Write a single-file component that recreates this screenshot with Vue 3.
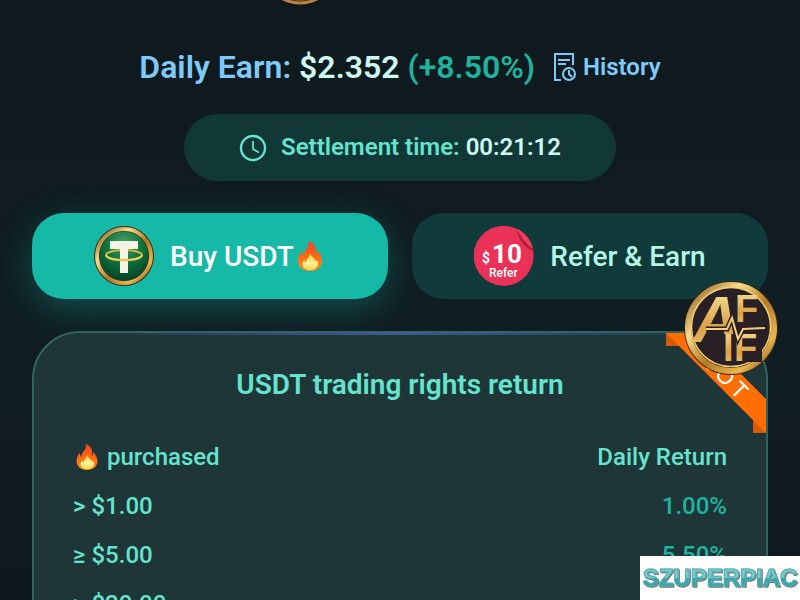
<script setup>
import { ref, computed, onMounted, onUnmounted } from 'vue'

const rows = [
  { id: 1, sign: '>', amount: '$1.00', rate: '1.00%' },
  { id: 2, sign: '≥', amount: '$5.00', rate: '5.50%' },
  { id: 3, sign: '≥', amount: '$20.00', rate: '6.00%' },
]

const secondsLeft = ref(21 * 60 + 12)
let timer = null

const countdown = computed(() => {
  const s = secondsLeft.value
  return [Math.floor(s / 3600), Math.floor(s / 60) % 60, s % 60]
    .map((n) => String(n).padStart(2, '0'))
    .join(':')
})

onMounted(() => {
  timer = setInterval(() => {
    secondsLeft.value = Math.max(0, secondsLeft.value - 60)
  }, 60000)
})
onUnmounted(() => clearInterval(timer))
</script>

<template>
  <main class="page">
    <svg class="defs" aria-hidden="true">
      <defs>
        <linearGradient id="gold" x1="0" y1="0" x2="1" y2="1">
          <stop offset="0" stop-color="#7a4d10" />
          <stop offset="0.3" stop-color="#f8dc8c" />
          <stop offset="0.55" stop-color="#b07a24" />
          <stop offset="0.8" stop-color="#e9b650" />
          <stop offset="1" stop-color="#5b3608" />
        </linearGradient>
        <linearGradient id="letters" x1="0" y1="0" x2="0" y2="1">
          <stop offset="0" stop-color="#fbe6a4" />
          <stop offset="0.6" stop-color="#d9a146" />
          <stop offset="1" stop-color="#f0c872" />
        </linearGradient>
        <radialGradient id="green" cx="0.5" cy="0.25" r="0.8">
          <stop offset="0" stop-color="#4fa566" />
          <stop offset="0.45" stop-color="#0f7440" />
          <stop offset="1" stop-color="#043d22" />
        </radialGradient>
        <linearGradient id="flame" x1="0" y1="0" x2="0" y2="1">
          <stop offset="0" stop-color="#f4412c" />
          <stop offset="0.6" stop-color="#ff6d10" />
          <stop offset="1" stop-color="#ff9416" />
        </linearGradient>
        <linearGradient id="core" x1="0" y1="0" x2="0" y2="1">
          <stop offset="0" stop-color="#ffc928" />
          <stop offset="0.6" stop-color="#fff09a" />
          <stop offset="1" stop-color="#ffd94a" />
        </linearGradient>
        <symbol id="fire" viewBox="0 0 24 30">
          <path fill="url(#flame)" d="M10 0c5 1 8 5 8 10 0 2-.3 3-.5 4 1.500-1 2-3 1.800-5 3 4 4.700 7 4.700 11 0 6-5 10-12 10S0 26 0 20c0-4 1.500-8 4-10-.2 2 .2 4 1.500 5 0-4 2-6 4-8.500C11 4.500 11 2 10 0z" />
          <path fill="url(#core)" d="M12 12c.5 3 5 5 6 9 .4-.8.700-1.600.7-2.500 1 1.500 1.300 2.500 1.300 4 0 4-3.500 6.500-8 6.500s-7.500-2.500-7.500-6c0-2 1-3.500 2-4.500 0 1.500.5 2.500 1.500 3 0-4 4-5.500 4-9.500z" />
        </symbol>
      </defs>
    </svg>

    <svg class="coin-edge" viewBox="0 0 48 6" aria-hidden="true">
      <circle cx="24" cy="-33" r="38" fill="#2a190c" />
      <circle cx="24" cy="-33" r="36" fill="none" stroke="#b88448" stroke-width="3" />
      <circle cx="24" cy="-33" r="34" fill="#6d5a34" />
    </svg>

    <section class="earn">
      <p class="earn-line">
        Daily Earn: <span class="amount">$2.352</span> <span class="rate">(+8.50%)</span>
      </p>
      <a class="history" href="#history">
        <svg class="history-icon" viewBox="0 0 24 30" fill="none" stroke="currentColor" stroke-width="2" aria-hidden="true">
          <path d="M8 28H2V2h18v11M5 8h12M5 12h8" />
          <circle cx="16" cy="22" r="6" />
          <path d="M16 18v4l3 3" />
        </svg>
        History
      </a>
    </section>

    <div class="settlement">
      <svg class="clock" viewBox="0 0 28 28" fill="none" stroke="currentColor" aria-hidden="true">
        <circle cx="14" cy="14" r="12" stroke-width="2.400" />
        <path d="M14 7v8l6 3.500" stroke-width="1.800" />
      </svg>
      <span>Settlement time: <b class="time">{{ countdown }}</b></span>
    </div>

    <div class="actions">
      <button class="action buy" type="button">
        <svg class="badge" viewBox="0 0 60 60" aria-hidden="true">
          <circle cx="30" cy="30" r="30" fill="#33290f" />
          <circle cx="30" cy="30" r="27" fill="none" stroke="url(#gold)" stroke-width="4" />
          <circle cx="30" cy="30" r="24.500" fill="url(#green)" />
          <path d="M16 15h28v8H34v24h-8V23H16z" fill="#f5f2e6" />
          <ellipse cx="30" cy="29" rx="18" ry="5" fill="none" stroke="#d3b944" stroke-width="2" />
          <path d="M26 23h8v8h-8z" fill="#f5f2e6" />
          <path d="M12 29c2 7 34 7 36 0" fill="none" stroke="#e2cc58" stroke-width="2" />
        </svg>
        <span class="label buy-label">Buy USDT<svg class="fire" aria-hidden="true"><use href="#fire" /></svg></span>
      </button>
      <button class="action refer" type="button">
        <svg class="badge" viewBox="0 0 60 60" aria-hidden="true">
          <path d="M43 3A30 30 0 1 0 59 24z" fill="#ea3158" />
          <path d="M43 3c1 9 5 17 16 22C59 18 52 8 43 3z" fill="#b81a3d" />
          <path d="M43 3c4 8 9 15 16 20C57 14 51 6 43 3z" fill="#ee3f63" />
          <text x="8" y="37" class="badge-dollar">$</text>
          <text x="18" y="37" class="badge-number">10</text>
          <text x="15" y="51" class="badge-word">Refer</text>
        </svg>
        <span class="label">Refer &amp; Earn</span>
      </button>
    </div>

    <section class="card">
      <h2 class="card-title">USDT trading rights return</h2>
      <table class="returns">
        <thead>
          <tr>
            <th><span class="purchased"><svg class="fire" aria-hidden="true"><use href="#fire" /></svg>purchased</span></th>
            <th>Daily Return</th>
          </tr>
        </thead>
        <tbody>
          <tr v-for="row in rows" :key="row.id">
            <td>{{ row.sign }} {{ row.amount }}</td>
            <td>{{ row.rate }}</td>
          </tr>
        </tbody>
      </table>
      <svg class="ribbon" viewBox="0 0 100 100" aria-hidden="true">
        <path d="M0 0h14v13H0zM87 86h13v14H87z" fill="#d85a08" />
        <path d="M0 0h34l66 66v34z" fill="#ff6d05" />
        <text y="7" transform="translate(57 42) rotate(45)" text-anchor="middle" class="ribbon-text">H O T</text>
      </svg>
    </section>

    <svg class="float-logo" viewBox="0 0 94 94" role="img" aria-label="AFIF">
      <circle cx="47" cy="47" r="47" fill="#3c2508" />
      <circle cx="47" cy="47" r="43" fill="none" stroke="url(#gold)" stroke-width="6" />
      <circle cx="47" cy="46" r="39.500" fill="#282024" stroke="#f3cc78" stroke-width="1.500" />
      <text x="9" y="61" class="logo-a">A</text>
      <path d="M38 53h40v28H38z" fill="#282024" />
      <text x="51" y="41" class="logo-letter">F</text>
      <text x="39" y="80" class="logo-letter">I</text>
      <text x="50" y="80" class="logo-letter">F</text>
      <path d="M22 48h21l5-11 6 21 5-10 22-1" fill="none" stroke="#282024" stroke-width="5" />
      <path d="M22 48h21l5-11 6 21 5-10 22-1" fill="none" stroke="#f3cd79" stroke-width="2" />
    </svg>

    <div class="stamp"><span class="stamp-text">SZUPERPIAC</span></div>
  </main>
</template>

<style>
body {
  margin: 0;
  background: #0f1a1f;
}
</style>

<style scoped>
.page {
  position: relative;
  display: flex;
  flex-direction: column;
  box-sizing: border-box;
  height: 100vh;
  padding: 0 32px;
  overflow: hidden;
  background: linear-gradient(180deg, #0f1a1f, #101d22 60%, #0d181f);
  font-family: Roboto, sans-serif;
  font-weight: 600;
  color: #65e3cd;
}

.defs {
  position: absolute;
  width: 0;
  height: 0;
}

.coin-edge {
  flex: none;
  align-self: center;
  width: 48px;
  height: 6px;
  margin-right: 200px;
}

.earn {
  display: flex;
  flex: none;
  align-items: center;
  justify-content: center;
  gap: 18px;
  margin-top: 37px;
  color: #7fcaf8;
}

.earn-line {
  margin: 0;
  font-size: 32px;
  line-height: 48px;
}

.amount {
  color: #d0faf1;
}

.rate {
  color: #1fb39e;
}

.history {
  display: flex;
  align-items: center;
  gap: 6px;
  color: inherit;
  font-size: 24px;
  text-decoration: none;
}

.history-icon {
  width: 24px;
  height: 30px;
}

.settlement {
  display: flex;
  flex: none;
  align-items: center;
  align-self: center;
  gap: 14px;
  margin-top: 23px;
  padding: 0 55px;
  border-radius: 34px;
  background: #113837;
  font-size: 24px;
  line-height: 67px;
}

.clock {
  width: 28px;
  height: 28px;
}

.time {
  color: #d0faf1;
  font-weight: 600;
}

.actions {
  display: grid;
  flex: none;
  grid-template-columns: 1fr 1fr;
  gap: 24px;
  margin-top: 32px;
}

.action {
  display: flex;
  align-items: center;
  justify-content: center;
  gap: 16px;
  height: 86px;
  padding: 0;
  border: 0;
  border-radius: 32px;
  font-family: inherit;
  font-size: 28px;
  font-weight: 500;
}

.buy {
  background: #16b8a6;
  box-shadow: 0 10px 36px rgba(20, 184, 166, 0.32);
  color: #fff;
}

.refer {
  background: #113b3a;
  color: #b5f7e7;
}

.badge {
  width: 60px;
  height: 60px;
}

.label {
  display: flex;
  align-items: center;
  gap: 4px;
}

.buy-label {
  padding-right: 4px;
}

.fire {
  width: 24px;
  height: 30px;
}

.badge text {
  fill: #fff;
  font-family: Roboto, sans-serif;
  font-weight: 700;
}

.badge .badge-dollar {
  font-size: 14px;
}

.badge .badge-number {
  font-size: 26px;
}

.badge .badge-word {
  font-size: 12px;
  font-weight: 500;
}

.card {
  position: relative;
  flex: none;
  margin-top: 32px;
  padding: 32px 39px;
  border: 2px solid #30655f;
  border-radius: 48px 48px 0 0;
  background: #1f3638;
}

.card::before {
  content: '';
  position: absolute;
  top: -1px;
  right: 48px;
  left: 48px;
  height: 3px;
  background: linear-gradient(90deg, transparent, #405a91, transparent);
}

.card-title {
  margin: 0;
  font-size: 28px;
  font-weight: 600;
  line-height: 40px;
  text-align: center;
}

.returns {
  width: 100%;
  margin-top: 27px;
  border-collapse: collapse;
  font-size: 24px;
}

.returns th,
.returns td {
  height: 49px;
  padding: 0;
  font-weight: 500;
  text-align: left;
}

.returns th:last-child,
.returns td:last-child {
  text-align: right;
}

.returns td:last-child {
  color: #1fb39e;
}

.purchased {
  display: flex;
  align-items: center;
  gap: 9px;
  padding-left: 3px;
}

.purchased .fire {
  width: 22px;
  height: 26px;
}

.ribbon {
  position: absolute;
  top: 0;
  right: 0;
  width: 100px;
  height: 100px;
}

.ribbon-text {
  fill: #fff;
  font-family: Lato, sans-serif;
  font-size: 22px;
  font-weight: 400;
}

.float-logo {
  position: absolute;
  top: 281px;
  right: 22px;
  width: 94px;
  height: 94px;
}

.float-logo text {
  fill: url(#letters);
  font-family: "Liberation Sans", sans-serif;
  font-weight: 700;
}

.float-logo .logo-a {
  font-size: 64px;
  font-style: italic;
}

.float-logo .logo-letter {
  font-size: 38px;
}

.stamp {
  position: absolute;
  right: 0;
  bottom: 0;
  display: flex;
  align-items: center;
  justify-content: center;
  width: 160px;
  height: 44px;
  background: #fff;
}

.stamp-text {
  background: linear-gradient(180deg, #7cc9cb 50%, #38a3a9 50%);
  background-clip: text;
  color: transparent;
  filter: drop-shadow(1px 1px 0 #777);
  font-family: "Liberation Sans", sans-serif;
  font-size: 24px;
  font-weight: 700;
  line-height: 28px;
  -webkit-text-stroke: 1px #4fb0b5;
}
</style>
